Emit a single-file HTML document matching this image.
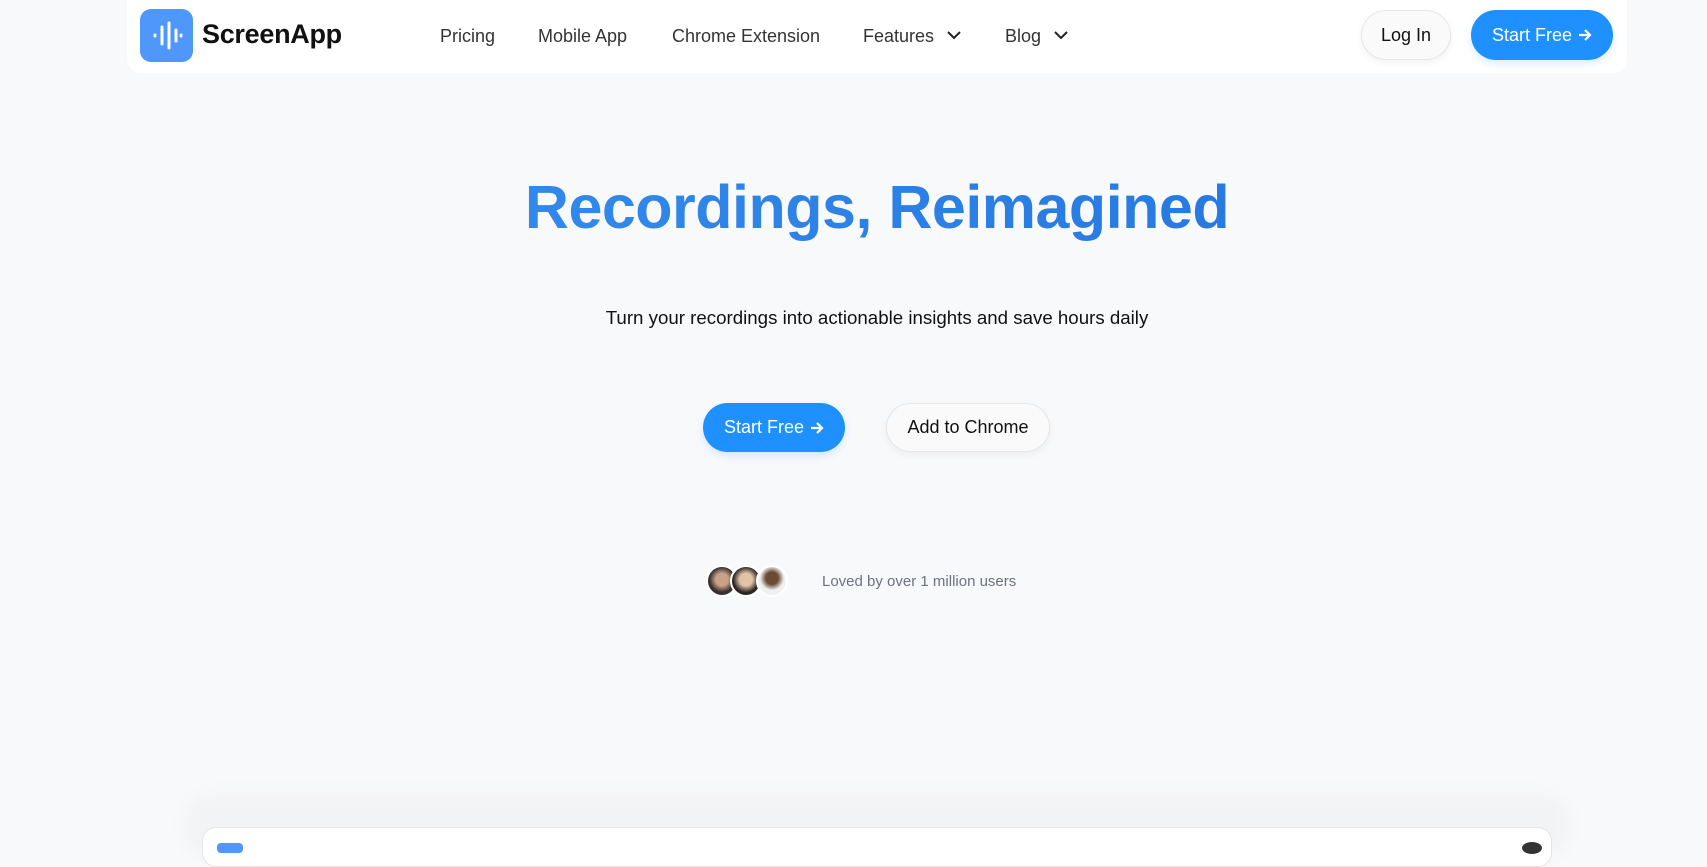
<!DOCTYPE html>
<html><head><meta charset="utf-8"><style>
*{margin:0;padding:0;box-sizing:border-box}
body{width:1707px;height:847px;overflow:hidden;background:#f8f9fb;font-family:"Liberation Sans",Arial,sans-serif;position:relative}
.abs{position:absolute}
.nav{left:127px;top:0;width:1500px;height:73px;background:#fff;border-radius:0 0 14px 14px}
.logo{left:140px;top:9px;width:53px;height:53px;border-radius:11px;background:#4f97fb}
.brand{left:202px;top:19px;font-size:27px;font-weight:600;color:#111;letter-spacing:-0.3px}
.link{top:26px;font-size:18px;color:#333}
.btn{border-radius:30px;display:flex;align-items:center;justify-content:center;font-size:18px}
.blue{background:#1e90ff;color:#fff;box-shadow:0 4px 8px rgba(30,144,255,.15)}
.white{background:#fafafa;color:#111;border:1px solid #e6e6e6;box-shadow:0 3px 8px rgba(0,0,0,.05)}
.btn svg{margin-left:6px}
h1{position:absolute;left:0;width:1754px;text-align:center;top:172px;font-size:61px;font-weight:600;letter-spacing:-0.5px;color:#2a84ea;background:linear-gradient(90deg,#3b93f3,#1f6fd8);-webkit-background-clip:text;background-clip:text;-webkit-text-fill-color:transparent}
.sub{left:0;width:1754px;text-align:center;top:307px;font-size:18.7px;color:#111}
.av{width:32px;height:32px;border-radius:50%;border:2px solid #fff;top:565px}
</style></head><body>
<div class="abs nav"></div>
<div class="abs logo"><svg width="53" height="53" viewBox="0 0 53 53"><g stroke="#fff" stroke-width="3" stroke-linecap="round"><line x1="15" y1="26" x2="15" y2="27"/><line x1="22" y1="18" x2="22" y2="35"/><line x1="29" y1="14" x2="29" y2="39"/><line x1="36" y1="21" x2="36" y2="32"/><line x1="41" y1="26" x2="41" y2="27"/></g></svg></div>
<div class="abs brand">ScreenApp</div>
<div class="abs link" style="left:440px">Pricing</div>
<div class="abs link" style="left:538px">Mobile App</div>
<div class="abs link" style="left:672px">Chrome Extension</div>
<div class="abs link" style="left:863px">Features</div>
<svg class="abs" style="left:946px;top:30px" width="16" height="10" viewBox="0 0 16 10"><path d="M2 2l6 6 6-6" fill="none" stroke="#222" stroke-width="2"/></svg>
<div class="abs link" style="left:1005px">Blog</div>
<svg class="abs" style="left:1053px;top:30px" width="16" height="10" viewBox="0 0 16 10"><path d="M2 2l6 6 6-6" fill="none" stroke="#222" stroke-width="2"/></svg>
<div class="abs btn white" style="left:1361px;top:10px;width:90px;height:50px">Log In</div>
<div class="abs btn blue" style="left:1471px;top:10px;width:142px;height:50px">Start Free<svg width="14" height="14" viewBox="0 0 14 14"><path d="M1 7h11M7 2l5 5-5 5" fill="none" stroke="#fff" stroke-width="2.2"/></svg></div>
<h1>Recordings, Reimagined</h1>
<div class="abs sub">Turn your recordings into actionable insights and save hours daily</div>
<div class="abs btn blue" style="left:703px;top:403px;width:142px;height:49px">Start Free<svg width="14" height="14" viewBox="0 0 14 14"><path d="M1 7h11M7 2l5 5-5 5" fill="none" stroke="#fff" stroke-width="2.2"/></svg></div>
<div class="abs btn white" style="left:886px;top:403px;width:164px;height:49px">Add to Chrome</div>
<div class="abs av" style="left:706px;background:radial-gradient(circle at 50% 45%,#c9a088 30%,#3a3030 60%)"></div>
<div class="abs av" style="left:730px;background:radial-gradient(circle at 50% 45%,#e3c3a5 30%,#2a2624 62%)"></div>
<div class="abs av" style="left:756px;background:radial-gradient(circle at 50% 40%,#6b4a35 28%,#f0f0f0 55%)"></div>
<div class="abs" style="left:822px;top:573px;font-size:15px;color:#6b7280">Loved by over 1 million users</div>
<div class="abs" style="left:186px;top:795px;width:1382px;height:60px;border-radius:20px;background:#f2f3f5;filter:blur(6px)"></div>
<div class="abs" style="left:202px;top:827px;width:1350px;height:40px;background:#fff;border:1px solid #e5e5e5;border-radius:14px"></div>
<div class="abs" style="left:217px;top:843px;width:26px;height:10px;background:#4f97fb;border-radius:4px"></div>
<div class="abs" style="left:1522px;top:842px;width:20px;height:12px;background:#333;border-radius:50%"></div>
</body></html>
